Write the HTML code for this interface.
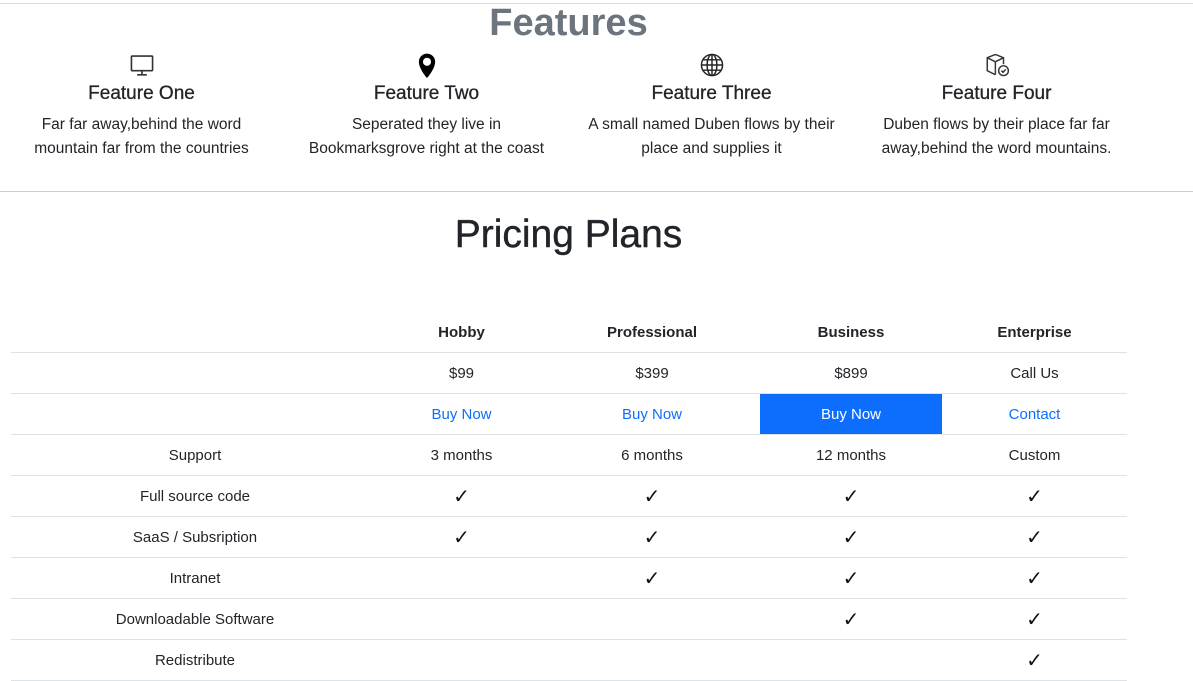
<!DOCTYPE html>
<html><head><meta charset="utf-8"><style>
body{margin:0;width:1193px;height:660px;overflow:hidden;background:#fff;font-family:"Liberation Sans",sans-serif;color:#212529;position:relative}
.abs{position:absolute}
.feat{position:absolute;top:52px;width:285px;text-align:center}
.feat svg{display:block;margin:0 auto}
.feat h4{margin:4px 0 0;font-size:19px;font-weight:normal;line-height:24px;color:#212529;-webkit-text-stroke:0.3px #212529}
.feat p{margin:7px 0 0;font-size:15.5px;line-height:24px}
table{position:absolute;left:11px;top:313px;border-collapse:collapse;font-size:15px}
td,th{height:40px;text-align:center;padding:0;border-bottom:1px solid #dee2e6}
th{font-weight:bold;height:39px}
.bl{color:#0d6efd}
.hl{background:#0d6efd;color:#fff}
.ck{font-size:20px;font-family:"DejaVu Sans",sans-serif;color:#111}
</style></head><body>
<div class="abs" style="left:0;top:3px;width:1193px;height:1px;background:#ddd"></div>
<div class="abs" style="left:0;top:1px;width:1137px;text-align:center;font-size:38px;font-weight:bold;color:#6c757d;line-height:44px">Features</div>

<div class="feat" style="left:-1px">
<svg width="26" height="26" viewBox="0 0 16 16" fill="none" stroke="#333" stroke-width="1"><rect x="1.5" y="2.5" width="13" height="9" rx="0.5"/><path d="M8 11.5v2M5 14h6"/></svg>
<h4>Feature One</h4><p>Far far away,behind the word<br>mountain far from the countries</p></div>
<div class="feat" style="left:284px">
<svg width="26" height="26" viewBox="0 0 16 16"><path d="M8 16s5-5.5 5-10A5 5 0 0 0 3 6c0 4.5 5 10 5 10zm0-7.5a2.5 2.5 0 1 1 0-5 2.5 2.5 0 0 1 0 5z" fill="#000"/></svg>
<h4>Feature Two</h4><p>Seperated they live in<br>Bookmarksgrove right at the coast</p></div>
<div class="feat" style="left:569px">
<svg width="26" height="26" viewBox="0 0 16 16" fill="none" stroke="#222" stroke-width="0.9"><circle cx="8" cy="8" r="6.5"/><ellipse cx="8" cy="8" rx="3" ry="6.5"/><path d="M8 1.5v13M1.5 8h13M2.5 4.8h11M2.5 11.2h11"/></svg>
<h4>Feature Three</h4><p>A small named Duben flows by their<br>place and supplies it</p></div>
<div class="feat" style="left:854px">
<svg width="26" height="26" viewBox="0 0 16 16" fill="none" stroke="#333" stroke-width="0.9"><path d="M7 1.5l5 2v4M7 1.5l-5 2v8l5 2.5M2 3.5l5 2.5 5-2.5M7 6v8"/><circle cx="12" cy="11.5" r="3"/><path d="M10.7 11.5l1 1 1.7-1.8"/></svg>
<h4>Feature Four</h4><p>Duben flows by their place far far<br>away,behind the word mountains.</p></div>

<div class="abs" style="left:0;top:191px;width:1193px;height:1px;background:#ccc"></div>
<div class="abs" style="left:0;top:211px;width:1137px;text-align:center;font-size:39px;line-height:48px;color:#212529;-webkit-text-stroke:0.4px #212529">Pricing Plans</div>

<table>
<tr><th style="width:368px"></th><th style="width:165px">Hobby</th><th style="width:216px">Professional</th><th style="width:182px">Business</th><th style="width:185px">Enterprise</th></tr>
<tr><td></td><td>$99</td><td>$399</td><td>$899</td><td>Call Us</td></tr>
<tr><td></td><td class="bl">Buy Now</td><td class="bl">Buy Now</td><td class="hl">Buy Now</td><td class="bl">Contact</td></tr>
<tr><td>Support</td><td>3 months</td><td>6 months</td><td>12 months</td><td>Custom</td></tr>
<tr><td>Full source code</td><td class="ck">✓</td><td class="ck">✓</td><td class="ck">✓</td><td class="ck">✓</td></tr>
<tr><td>SaaS / Subsription</td><td class="ck">✓</td><td class="ck">✓</td><td class="ck">✓</td><td class="ck">✓</td></tr>
<tr><td>Intranet</td><td></td><td class="ck">✓</td><td class="ck">✓</td><td class="ck">✓</td></tr>
<tr><td>Downloadable Software</td><td></td><td></td><td class="ck">✓</td><td class="ck">✓</td></tr>
<tr><td>Redistribute</td><td></td><td></td><td></td><td class="ck">✓</td></tr>
</table>
</body></html>
